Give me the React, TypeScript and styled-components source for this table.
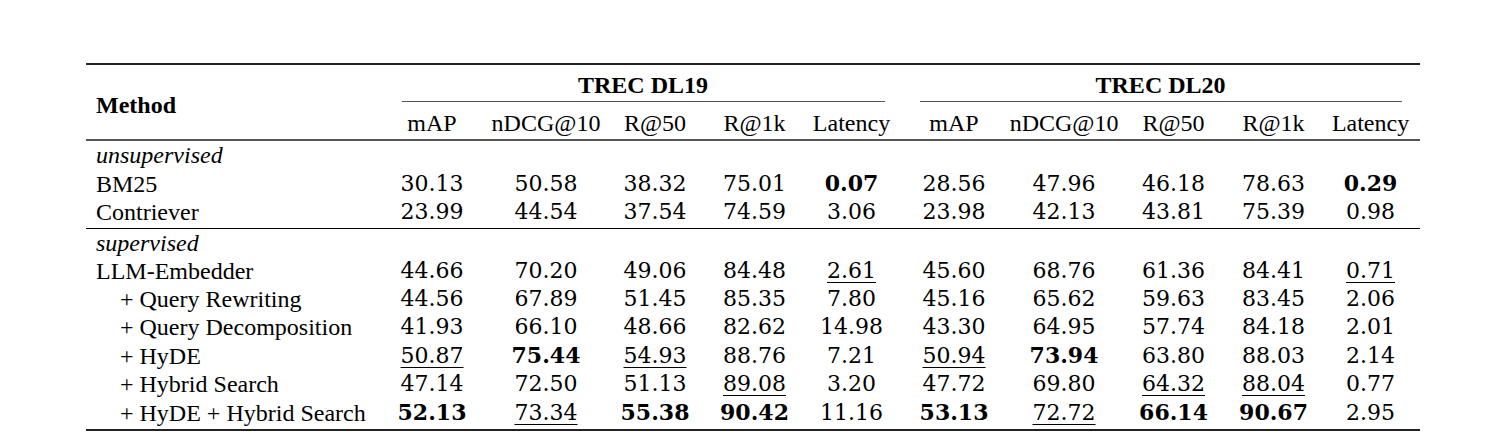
import React from "react";
import styled, { createGlobalStyle } from "styled-components";

const GlobalStyle = createGlobalStyle`
  html, body { margin: 0; padding: 0; background: #ffffff; }
  body { font-family: "Liberation Serif", "Times New Roman", serif; color: #000; }
`;

const Page = styled.div`
  padding: 63px 0 0 86px;
  width: 1334px;
`;

const Table = styled.table`
  width: 1334px;
  table-layout: fixed;
  border-collapse: separate;
  border-spacing: 0;
  border-top: 2px solid #222;
  border-bottom: 2px solid #222;
  font-family: "Liberation Serif", "Times New Roman", serif;
  font-size: 24px;
`;

const MethodHead = styled.th`
  text-align: left;
  vertical-align: middle;
  padding: 6px 0 0 10px;
  font-weight: 700;
  line-height: 28px;
  border-bottom: 2px solid #555;
`;

const GroupHead = styled.th`
  padding: 6px 0 0 0;
  font-weight: 700;
  text-align: center;
  vertical-align: top;
`;

const GroupTitle = styled.div<{ $shift: number }>`
  line-height: 28px;
  margin-left: ${(p) => p.$shift}px;
`;

const CMidRule = styled.div<{ $left: number; $right: number }>`
  margin: 2px ${(p) => p.$right}px 0 ${(p) => p.$left}px;
  border-top: 1px solid #555;
`;

const ColHead = styled.th`
  padding: 7px 0 2px 0;
  font-weight: 400;
  text-align: center;
  line-height: 28px;
  white-space: nowrap;
  border-bottom: 2px solid #555;
`;

const Row = styled.tr<{ $rule?: boolean; $padBottom?: number }>`
  & > td {
    height: 28px;
    line-height: 28px;
    padding-top: 0;
    padding-bottom: ${(p) => p.$padBottom ?? 0}px;
    border-bottom: ${(p) => (p.$rule ? "1px solid #000" : "none")};
  }
`;

const NameCell = styled.td<{ $indent?: boolean; $italic?: boolean }>`
  text-align: left;
  white-space: nowrap;
  padding-left: ${(p) => (p.$indent ? 34 : 10)}px;
  padding-right: 0;
  font-style: ${(p) => (p.$italic ? "italic" : "normal")};
`;

const NumCell = styled.td`
  text-align: center;
  white-space: nowrap;
  padding-left: 0;
  padding-right: 0;
  font-family: "DejaVu Serif", serif;
  font-size: 22px;
`;

const Num = styled.span<{ $bold?: boolean; $under?: boolean }>`
  font-weight: ${(p) => (p.$bold ? 700 : 400)};
  text-decoration: ${(p) => (p.$under ? "underline" : "none")};
  text-decoration-thickness: 1px;
  text-underline-offset: 4px;
`;

const widths = [289, 114, 114, 104, 95, 99, 106, 114, 105, 95, 99];
const cols = ["mAP", "nDCG@10", "R@50", "R@1k", "Latency"];

type RowData = {
  name: string;
  indent?: boolean;
  vals: string[];
  bold?: number[];
  under?: number[];
};

const unsup: RowData[] = [
  {
    name: "BM25",
    vals: ["30.13", "50.58", "38.32", "75.01", "0.07", "28.56", "47.96", "46.18", "78.63", "0.29"],
    bold: [4, 9],
  },
  {
    name: "Contriever",
    vals: ["23.99", "44.54", "37.54", "74.59", "3.06", "23.98", "42.13", "43.81", "75.39", "0.98"],
  },
];

const sup: RowData[] = [
  {
    name: "LLM-Embedder",
    vals: ["44.66", "70.20", "49.06", "84.48", "2.61", "45.60", "68.76", "61.36", "84.41", "0.71"],
    under: [4, 9],
  },
  {
    name: "+ Query Rewriting",
    indent: true,
    vals: ["44.56", "67.89", "51.45", "85.35", "7.80", "45.16", "65.62", "59.63", "83.45", "2.06"],
  },
  {
    name: "+ Query Decomposition",
    indent: true,
    vals: ["41.93", "66.10", "48.66", "82.62", "14.98", "43.30", "64.95", "57.74", "84.18", "2.01"],
  },
  {
    name: "+ HyDE",
    indent: true,
    vals: ["50.87", "75.44", "54.93", "88.76", "7.21", "50.94", "73.94", "63.80", "88.03", "2.14"],
    bold: [1, 6],
    under: [0, 2, 5],
  },
  {
    name: "+ Hybrid Search",
    indent: true,
    vals: ["47.14", "72.50", "51.13", "89.08", "3.20", "47.72", "69.80", "64.32", "88.04", "0.77"],
    under: [3, 7, 8],
  },
  {
    name: "+ HyDE + Hybrid Search",
    indent: true,
    vals: ["52.13", "73.34", "55.38", "90.42", "11.16", "53.13", "72.72", "66.14", "90.67", "2.95"],
    bold: [0, 2, 3, 5, 7, 8],
    under: [1, 6],
  },
];

function DataRow({ row, rule, padBottom }: { row: RowData; rule?: boolean; padBottom?: number }) {
  return (
    <Row $rule={rule} $padBottom={padBottom}>
      <NameCell $indent={row.indent}>{row.name}</NameCell>
      {row.vals.map((v, i) => (
        <NumCell key={i}>
          <Num $bold={row.bold?.includes(i)} $under={row.under?.includes(i)}>
            {v}
          </Num>
        </NumCell>
      ))}
    </Row>
  );
}

function LabelRow({ label }: { label: string }) {
  return (
    <Row>
      <NameCell $italic>{label}</NameCell>
      <td colSpan={10} />
    </Row>
  );
}

export default function App() {
  return (
    <>
      <GlobalStyle />
      <Page>
        <Table>
          <colgroup>
            {widths.map((w, i) => (
              <col key={i} style={{ width: w }} />
            ))}
          </colgroup>
          <thead>
            <tr>
              <MethodHead rowSpan={2}>Method</MethodHead>
              <GroupHead colSpan={5}>
                <GroupTitle $shift={10}>TREC DL19</GroupTitle>
                <CMidRule $left={27} $right={16} />
              </GroupHead>
              <GroupHead colSpan={5}>
                <GroupTitle $shift={0}>TREC DL20</GroupTitle>
                <CMidRule $left={19} $right={18} />
              </GroupHead>
            </tr>
            <tr>
              {[...cols, ...cols].map((c, i) => (
                <ColHead key={i}>{c}</ColHead>
              ))}
            </tr>
          </thead>
          <tbody>
            <LabelRow label="unsupervised" />
            {unsup.map((r, i) => {
              const last = i === unsup.length - 1;
              return <DataRow key={r.name} row={r} rule={last} padBottom={last ? 2 : 0} />;
            })}
            <LabelRow label="supervised" />
            {sup.map((r, i) => (
              <DataRow key={r.name} row={r} padBottom={i === sup.length - 1 ? 2 : 0} />
            ))}
          </tbody>
        </Table>
      </Page>
    </>
  );
}
